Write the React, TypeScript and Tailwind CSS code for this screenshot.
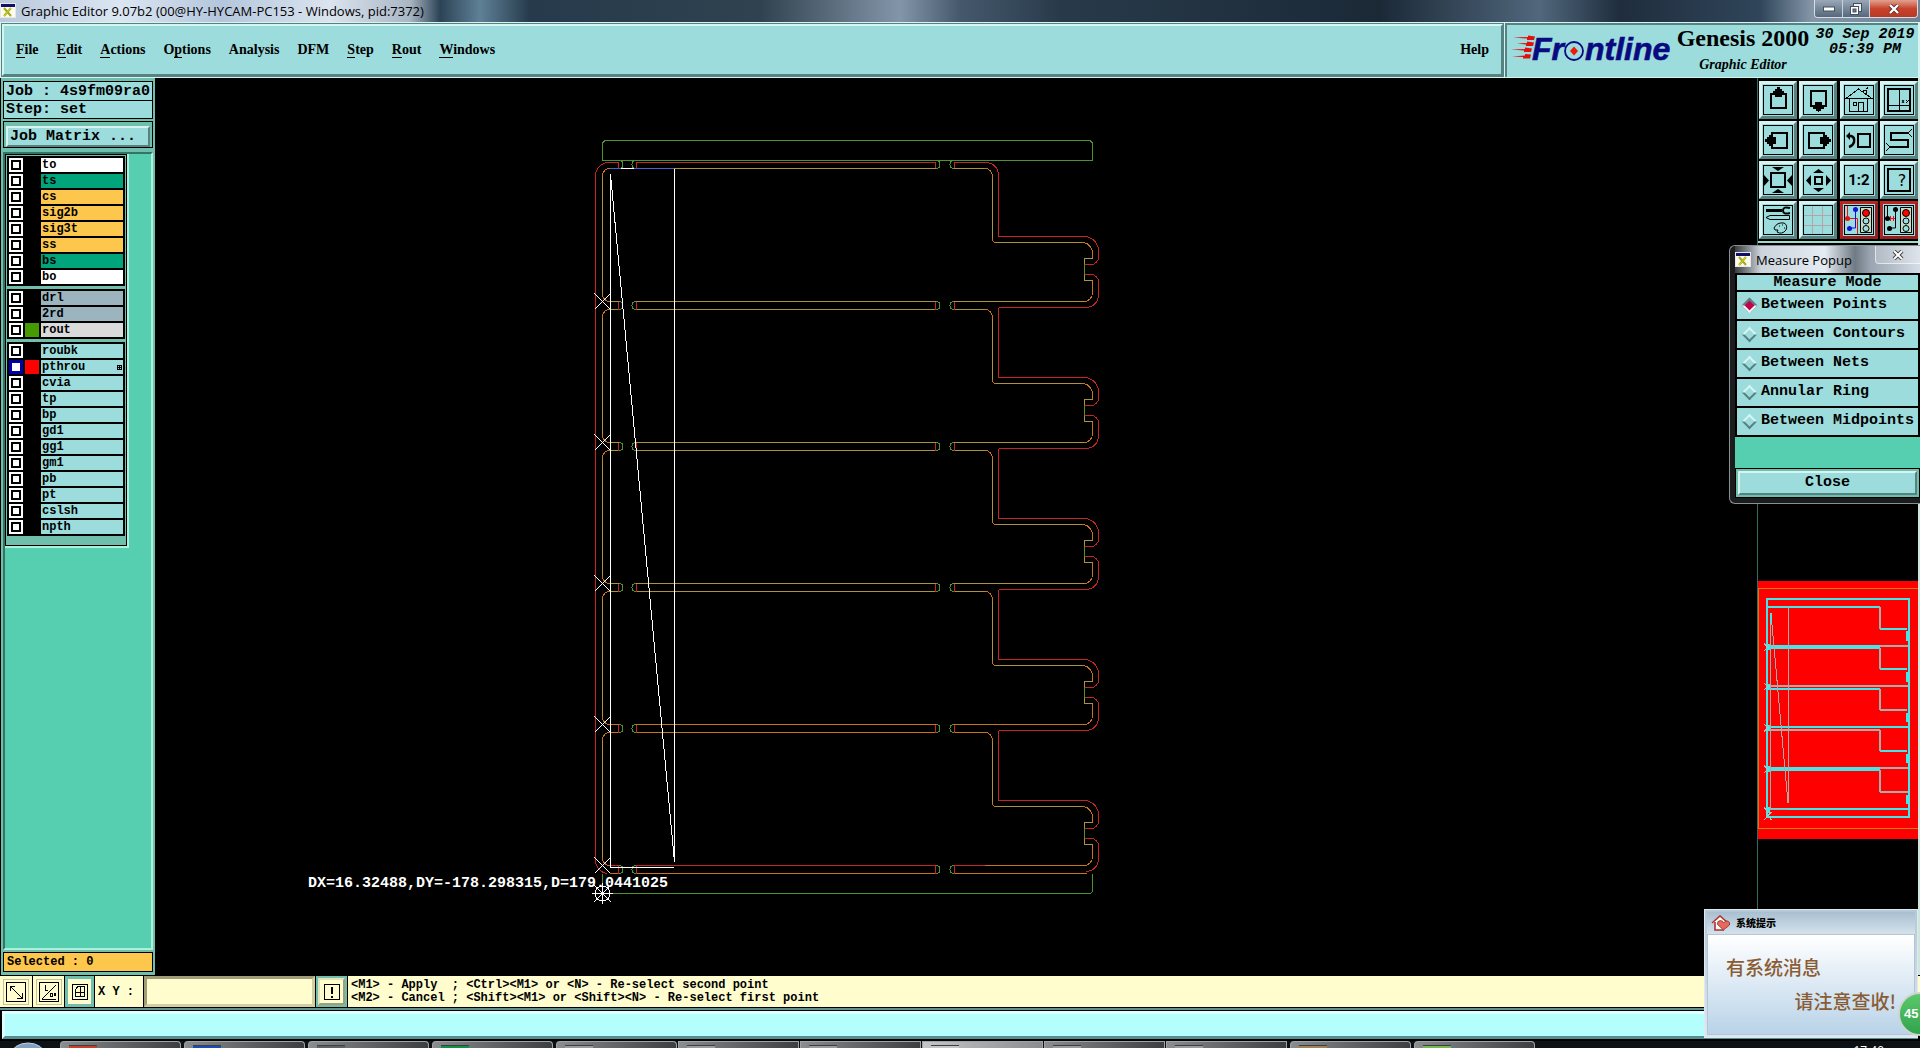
import React, { useState } from 'react';

const MONO = "font-['Liberation_Mono',monospace]";
const SERIF = "font-['Liberation_Serif',serif]";

// raised / sunken Motif bevels
const RAISED = 'border-t-[#d5f4f2] border-l-[#d5f4f2] border-b-[#568282] border-r-[#568282]';

interface MenuEntry {
  before: string;
  key: string;
  after: string;
}

const MENUS: MenuEntry[] = [
  { before: '', key: 'F', after: 'ile' },
  { before: '', key: 'E', after: 'dit' },
  { before: '', key: 'A', after: 'ctions' },
  { before: 'O', key: 'p', after: 'tions' },
  { before: 'Analysis', key: '', after: '' },
  { before: 'DFM', key: '', after: '' },
  { before: '', key: 'S', after: 'tep' },
  { before: '', key: 'R', after: 'out' },
  { before: '', key: 'W', after: 'indows' },
];

interface Layer {
  name: string;
  bg: string;
  swatch?: string;
  active?: boolean;
}

const BOARD = 'bg-[#9cdcdc]';

const LAYER_GROUPS: Layer[][] = [
  [
    { name: 'to', bg: 'bg-white' },
    { name: 'ts', bg: 'bg-[#00a57c]' },
    { name: 'cs', bg: 'bg-[#fdc64c]' },
    { name: 'sig2b', bg: 'bg-[#fdc64c]' },
    { name: 'sig3t', bg: 'bg-[#fdc64c]' },
    { name: 'ss', bg: 'bg-[#fdc64c]' },
    { name: 'bs', bg: 'bg-[#00a57c]' },
    { name: 'bo', bg: 'bg-white' },
  ],
  [
    { name: 'drl', bg: 'bg-[#9bb4be]' },
    { name: '2rd', bg: 'bg-[#9bb4be]' },
    { name: 'rout', bg: 'bg-[#dadada]', swatch: 'bg-[#479a00]' },
  ],
  [
    { name: 'roubk', bg: BOARD },
    { name: 'pthrou', bg: BOARD, swatch: 'bg-[#ff0000]', active: true },
    { name: 'cvia', bg: BOARD },
    { name: 'tp', bg: BOARD },
    { name: 'bp', bg: BOARD },
    { name: 'gd1', bg: BOARD },
    { name: 'gg1', bg: BOARD },
    { name: 'gm1', bg: BOARD },
    { name: 'pb', bg: BOARD },
    { name: 'pt', bg: BOARD },
    { name: 'cslsh', bg: BOARD },
    { name: 'npth', bg: BOARD },
  ],
];

const MEASURE_MODES = ['Between Points', 'Between Contours', 'Between Nets', 'Annular Ring', 'Between Midpoints'];

const AppIcon = () => (
  <svg viewBox="0 0 16 16" className="w-4 h-4 shrink-0" shapeRendering="crispEdges">
    <rect x="0" y="0" width="16" height="15" fill="#e8e8e8" />
    <rect x="1" y="1" width="14" height="3" fill="#10106a" />
    <rect x="1" y="4" width="14" height="10" fill="#fbfbf0" />
    <path d="M4 5 L11 13 M11 5 L4 13" stroke="#a4a818" strokeWidth="2" shapeRendering="auto" />
    <path d="M11 5 L4 13" stroke="#d8d820" strokeWidth="1" shapeRendering="auto" />
  </svg>
);

const TitleBar = () => (
  <header className="h-[22px] shrink-0 flex items-center bg-[linear-gradient(90deg,#b9c8dc_0px,#dce6f2_120px,#b4c6dc_220px,#dbe4ef_330px,#a9b6c4_410px,#2c4355_440px,#5f8096_480px,#263a4c_530px,#30424f_760px,#8395a8_900px,#46596c_960px,#283a4a_1060px,#1b2937_1380px,#51677c_1540px,#1f2d3d_1620px,#30455a_1760px,#8496a8_1812px,#6f8296_1920px)]">
    <AppIcon />
    <span className="ml-[5px] text-[13px] leading-5 text-black font-['Open_Sans',sans-serif]">
      Graphic Editor 9.07b2 (00@HY-HYCAM-PC153 - Windows, pid:7372)
    </span>
    <div className="ml-auto mr-[2px] self-start flex h-[18px] rounded-b border border-t-0 border-[#d5dde6] overflow-hidden">
      <button aria-label="Minimize" className="w-[28px] border-r border-[#c8d2dc] bg-gradient-to-b from-[#9aa8b8] to-[#56687c] flex items-center justify-center">
        <svg viewBox="0 0 12 6" className="w-3 h-[6px]"><rect x="0.5" y="1" width="11" height="4" fill="#fff" stroke="#44505e" /></svg>
      </button>
      <button aria-label="Restore" className="w-[27px] border-r border-[#c8d2dc] bg-gradient-to-b from-[#9aa8b8] to-[#56687c] flex items-center justify-center">
        <svg viewBox="0 0 12 12" className="w-3 h-3" fill="none">
          <rect x="3.5" y="0.5" width="8" height="8" fill="#eee" stroke="#44505e" />
          <rect x="0.5" y="3.5" width="8" height="8" fill="#fff" stroke="#44505e" />
          <rect x="3" y="6" width="3" height="3" fill="#6b7b8c" stroke="#44505e" />
        </svg>
      </button>
      <button aria-label="Close window" className="w-[47px] bg-gradient-to-b from-[#e0a090] via-[#c8432c] to-[#b83a24] flex items-center justify-center">
        <svg viewBox="0 0 12 10" className="w-3 h-[10px]">
          <path d="M2 1 L10 9 M10 1 L2 9" stroke="#5a2a2a" strokeWidth="4" />
          <path d="M2 1 L10 9 M10 1 L2 9" stroke="#fff" strokeWidth="2.4" />
        </svg>
      </button>
    </div>
  </header>
);

const Logo = () => (
  <svg viewBox="0 0 165 34" className="w-[165px] h-[34px] shrink-0">
    <g fill="#e01010">
      <path d="M4 5.5 L19 5 V3.500 L26 4.500 L25 8 L18 8 V6.5 Z" />
      <path d="M8 11.5 L18 11 V9.500 L25 10.500 L24 14 L17 14 V12.5 Z" />
      <path d="M2 17.5 L16 17 V15.5 L23 16.500 L22 20 L15 20 V18.5 Z" />
      <path d="M3 24.5 L16 23.5 V22 L22 22.500 L21 26.500 L14 26.5 V25 Z" />
    </g>
    <g fill="#0a0a80" stroke="#0a0a80" strokeWidth="0.6" fontFamily="'Liberation Sans', sans-serif" fontWeight="bold" fontStyle="italic" fontSize="32">
      <text x="23" y="28">Fr</text>
      <text x="76" y="28">ntline</text>
    </g>
    <circle cx="65" cy="19" r="9" fill="none" stroke="#0a0a80" strokeWidth="1.8" />
    <path d="M65 14.5 L69 19 L65 23.5 L61 19 Z" fill="#f01808" />
  </svg>
);

const MenuBar = () => (
  <div className="h-[56px] shrink-0 flex bg-[#d5f4f2]">
    <nav className={`flex-1 flex items-center m-[2px] pl-[12px] pr-3 border-2 bg-[#9cdcdc] ${RAISED} outline outline-1 outline-[#568282] ${SERIF} font-bold text-[14px] leading-4 gap-[18px]`}>
      {MENUS.map((m) => (
        <button key={m.before + m.key + m.after} className="whitespace-pre">
          {m.before}
          {m.key && <span className="border-b border-black">{m.key}</span>}
          {m.after}
        </button>
      ))}
      <button className="ml-auto">Help</button>
    </nav>
    <div className="w-[413px] mr-[2px] my-[1px] flex bg-[#9cdcdc] border-t-2 border-l-2 border-[#568282]">
      <div className="pt-[7px] pl-[2px]"><Logo /></div>
      <div className={`${SERIF} font-bold w-[138px] text-center shrink-0 whitespace-nowrap`}>
        <div className="text-[24px] leading-[27px]">Genesis 2000</div>
        <div className="text-[14px] leading-[26px] italic">Graphic Editor</div>
      </div>
      <div className={`${MONO} font-bold italic text-[15px] leading-[15px] pt-[2px] text-center flex-1 whitespace-nowrap`}>
        <div>30 Sep 2019</div>
        <div>05:39 PM</div>
      </div>
    </div>
  </div>
);

const LayerRow = ({ layer }: { layer: Layer }) => (
  <label className="flex gap-[2px] h-[14px]">
    <input
      type="checkbox"
      defaultChecked={layer.active}
      className="appearance-none w-[14px] h-[14px] shrink-0 bg-white border-2 border-white shadow-[inset_0_0_0_2px_#000] checked:border-[#0000a8] checked:shadow-[inset_0_0_0_1px_#0000a8]"
    />
    <span className={`w-[14px] shrink-0 ${layer.swatch ?? 'bg-black'}`} />
    <span className={`flex-1 pl-px flex items-center justify-between ${layer.bg}`}>
      <span className="text-[12px] leading-[14px]">{layer.name}</span>
      {layer.active && (
        <svg viewBox="0 0 5 5" className="w-[5px] h-[5px] mr-px" shapeRendering="crispEdges">
          <path d="M0 0 H5 V5 H0 Z" fill="#000" />
          <path d="M1 1 h1 v1 h-1 Z M3 1 h1 v1 h-1 Z M1 3 h1 v1 h-1 Z M3 3 h1 v1 h-1 Z" fill="#9cdcdc" />
        </svg>
      )}
    </span>
  </label>
);

const Sidebar = () => (
  <aside className={`w-[155px] shrink-0 flex flex-col bg-[#6fbfac] pl-[2px] pr-[2px] pt-[3px] pb-[3px] border-l border-black ${MONO} font-bold`}>
    <div className="border border-black bg-[#9cdcdc] h-[20px] px-[2px] text-[15px] leading-[19px] whitespace-pre">Job : 4s9fm09ra0</div>
    <div className="border border-black border-t-0 bg-[#9cdcdc] h-[18px] px-[2px] text-[15px] leading-[18px] whitespace-pre">Step: set</div>
    <div className="mt-[2px] border border-black p-[2px] h-[27px]">
      <button className={`w-full h-full border-2 bg-[#9cdcdc] text-left pl-[2px] text-[15px] leading-[17px] ${RAISED}`}>Job Matrix ...</button>
    </div>
    <div className="mt-[4px] flex-1 bg-[#55cfb0] border-2 border-t-[#347466] border-l-[#347466] border-r-[#aef0dc] border-b-[#aef0dc]">
      <div className="w-[124px] border-r-2 border-b-2 border-[#aef0dc] pt-0">
        <div className="border border-black p-px pb-[9px] flex flex-col gap-[3px] bg-[#6fbfac]">
          {LAYER_GROUPS.map((group) => (
            <div key={group[0].name} className="bg-black p-[2px] flex flex-col gap-[2px]">
              {group.map((l) => (
                <LayerRow key={l.name} layer={l} />
              ))}
            </div>
          ))}
        </div>
      </div>
    </div>
    <div className="mt-[2px] border border-black bg-[#fdc64c] h-[20px] px-[3px] text-[12px] leading-[18px]">Selected : 0</div>
  </aside>
);

const GREEN = '#4f9230';
const RED = '#c42626';
const YELLOW = '#ab9340';
const ORANGE = '#c87418';
const PITCH = 141;

const Slots = ({ y, top, bottom }: { y: number; top: string; bottom: string }) => (
  <g>
    <path d={`M610 ${y} H619 M636 ${y} H936 M954 ${y} H985`} stroke={top} />
    <path d={`M610 ${y + 8} H619 M636 ${y + 8} H936 M954 ${y + 8} H985`} stroke={bottom} />
    <path d={`M618.5 ${y} v8 M636.5 ${y} v8 M935.5 ${y} v8 M954.5 ${y} v8`} stroke={RED} />
    <path
      d={`M619 ${y} q4 0 4 4 t-4 4 M636 ${y} q-4 0 -4 4 t4 4 M936 ${y} q4 0 4 4 t-4 4 M954 ${y} q-4 0 -4 4 t4 4`}
      stroke={GREEN}
    />
  </g>
);

const Unit = ({ index }: { index: number }) => (
  <g transform={`translate(0 ${index * PITCH})`}>
    <path d="M602.5 176 V294" stroke={YELLOW} />
    <path d="M610.5 168.5 q-8 0 -8 8 M602.5 293 q0 8.500 8 8.500" stroke={ORANGE} />
    <path d="M984 168.500 q8.500 0 8.500 8.500 V239 q0 3.500 3.500 3.500" stroke={ORANGE} />
    <path d="M992.500 178 V238" stroke={YELLOW} />
    <path d="M996 242.500 H1082" stroke={YELLOW} />
    <path d="M1082 242.500 a10.500 10.500 0 0 1 10.500 10.500 V258.500" stroke={ORANGE} />
    <path d="M1092.500 258.500 H1084.500 V264 M1084.500 275 V280.500 H1092.500" stroke={YELLOW} />
    <path d="M1084.500 264 V275" stroke={GREEN} />
    <path d="M1092.500 280.500 V293 a8.500 8.500 0 0 1 -8.500 8.500" stroke={ORANGE} />
    <path d="M985 301.500 H1084" stroke={index > 2 ? ORANGE : YELLOW} />
    <path d={index === 0 ? 'M986 162.500 a12.500 12.500 0 0 1 12.500 12.500 V236.500' : 'M998.500 166.500 V236.500'} stroke={RED} />
    <path
      d="M998 236.500 H1084 a14.500 14.500 0 0 1 14.500 14.500 V257 a7.500 7.500 0 0 1 -7.500 7.500 H1084.500 M1084.500 274.500 H1091 a7.500 7.500 0 0 1 7.500 7.500 V295 a12.500 12.500 0 0 1 -12.500 12.500"
      stroke={RED}
    />
    {index < 4 && <path d="M998.500 307.500 H1087" stroke={RED} />}
    <path d="M594.500 293.500 L610.500 309.500 M610.500 293.500 L594.500 309.500" stroke="#ffffff" />
  </g>
);

const BoardCanvas = () => (
  <svg viewBox="155 78 1602 897" className="w-full h-full block" fill="none" strokeWidth="1" shapeRendering="crispEdges">
    <path d="M602.500 160.500 V144.500 q0 -4 4 -4 H1088.500 q4 0 4 4 V160.500 Z" stroke={GREEN} />
    <path d="M602.500 873.500 V893.500 H1088.500 q4 0 4 -4 V873.500" stroke={GREEN} />
    <path d="M618.500 162.500 H609 a13.500 13.500 0 0 0 -13.500 13.500 V860 a13.500 13.500 0 0 0 12 13.500" stroke={RED} />
    <path d="M618.500 162.500 v6 M636.500 168.500 V162.500 H935.500 v6 M954.500 168.500 V162.500 H986" stroke={RED} />
    <path d="M619 160.500 q4 0 4 4 t-4 4 M636 160.500 q-4 0 -4 4 t4 4 M936 160.500 q4 0 4 4 t-4 4 M954 160.500 q-4 0 -4 4 t4 4" stroke={GREEN} />
    <path d="M674 168.500 H936 M954 168.500 H985" stroke={YELLOW} />
    {[0, 1, 2, 3, 4].map((i) => (
      <Unit key={i} index={i} />
    ))}
    <Slots y={301.5} top={YELLOW} bottom={YELLOW} />
    <Slots y={442.5} top={YELLOW} bottom={YELLOW} />
    <Slots y={583.5} top={YELLOW} bottom={YELLOW} />
    <Slots y={724.5} top={ORANGE} bottom={ORANGE} />
    <Slots y={865.5} top={RED} bottom={ORANGE} />
    <path d="M985 873.500 H1087" stroke={ORANGE} />

    <path d="M610 168.500 H674" stroke="#4a62d8" />
    <path d="M621 168.500 H634" stroke="#ffffff" />
    <path d="M610.500 174 V867.500 H674 M674.500 169 V862 L610.500 174" stroke="#ffffff" />

    <g stroke="#ffffff">
      <circle cx="602.500" cy="893.500" r="7.500" />
      <path d="M592 893.500 H613 M602.500 883 V904 M594 885 L611 902 M611 885 L594 902" />
    </g>
    <text x="308" y="887" fill="#ffffff" className={`${MONO} font-bold text-[15px]`}>
      DX=16.32488,DY=-178.298315,D=179.0441025
    </text>
  </svg>
);

const K = '#000';

// every glyph is drawn on a 30x30 grid inside its own 1px frame
const TOOLS: { label: string; art: React.ReactNode; danger?: boolean }[] = [
  { label: 'Pan up', art: <><path d="M8 9 H23 V23 H8 Z" stroke={K} strokeWidth="2" /><path d="M12 12 V8 H10 V6 H12 V4 H14 V2 H17 V4 H19 V6 H21 V8 H19 V12 Z" fill={K} /></> },
  { label: 'Pan down', art: <><path d="M8 6 H23 V21 H8 Z" stroke={K} strokeWidth="2" /><path d="M12 17 V22 H10 V24 H13 V26 H15 V27 H16 V26 H18 V24 H21 V22 H19 V17 Z" fill={K} /></> },
  { label: 'Home', art: <path d="M2 13.500 L14.500 4 L28 13.500 Z M5.500 13.500 V26.500 H23.500 V13.500 M14.500 26.500 V17.500 H19.500 V26.500 M9.500 17.500 H12.500 V20.500 H9.500 Z M19.500 7 V5.500 H22.500 V10 M21.500 3.500 H23.500 V1.500" stroke={K} shapeRendering="crispEdges" /> },
  { label: 'XY view', art: <><path d="M4 4 H26 V26 H4 Z" stroke={K} strokeWidth="2" /><path d="M15.5 4 V26 M4 20.500 H26 M18 15 L20 18 M20 15 L18 18 M22 15 L23.500 16.500 M25 15 L22 18" stroke={K} /></> },
  { label: 'Pan left', art: <><path d="M9 8 H24 V23 H9 Z" stroke={K} strokeWidth="2" /><path d="M13 12 H8 V10 H6 V12 H4 V14 H2 V17 H4 V19 H6 V21 H8 V19 H13 Z" fill={K} /></> },
  { label: 'Pan right', art: <><path d="M6 8 H21 V23 H6 Z" stroke={K} strokeWidth="2" /><path d="M17 12 H22 V10 H24 V12 H26 V14 H28 V17 H26 V19 H24 V21 H22 V19 H17 Z" fill={K} /></> },
  { label: 'Previous view', art: <><path d="M14 9 H26 V22 H14 Z" stroke={K} strokeWidth="2" /><path d="M2 11 L6 7 V15 Z" fill={K} /><path d="M5 11 H7 Q11 12 10 17 Q9 21 5 22" stroke={K} strokeWidth="2.500" /></> },
  { label: 'Serpentine', art: <><path d="M25 8 H7 V15 H24 V22 H5" stroke={K} strokeWidth="2" /><path d="M24 8 L28 4 M24 8 L28 12 M6 22 L2 18 M6 22 L2 26" stroke={K} /></> },
  { label: 'Zoom in', art: <><path d="M8 8 H22 V22 H8 Z" stroke={K} strokeWidth="2" /><path d="M9 2 H21 L15 6 Z M9 28 H21 L15 24 Z M1 10 V21 L6 15.500 Z M29 10 V21 L24 15.500 Z" fill={K} /></> },
  { label: 'Zoom out', art: <><path d="M12 12 H19 V19 H12 Z" stroke={K} strokeWidth="2" /><path d="M10 8 H21 L15.500 4 Z M10 23 H21 L15.500 27 Z M8 10 V21 L3 15.500 Z M23 10 V21 L28 15.500 Z" fill={K} /></> },
  { label: 'Scale 1:2', art: <text x="15" y="20" textAnchor="middle" fill={K} className="font-['Roboto',sans-serif] text-[15px] font-bold">1:2</text> },
  { label: 'Query', art: <><path d="M4 4 H26 V26 H4 Z" stroke={K} strokeWidth="2" /><text x="18" y="21" textAnchor="middle" fill={K} className="font-['DejaVu_Sans',sans-serif] text-[16px]">?</text></> },
  { label: 'Options', art: <><path d="M3 5.500 H19" stroke={K} strokeWidth="3" /><path d="M27 3 Q20 1 20 5.500 Q20 10 27 8" stroke={K} strokeWidth="2" /><path d="M3 12.500 L7 10.500 H26.500 V14.500 H7 Z" stroke={K} /><path d="M11 23 Q14 17 21 18 Q25 20 23 25 Q19 30 14 27 L15 25 L12 25 Z M16 21 h1 M19 20 h1 M21 23 h1" stroke={K} /></> },
  { label: 'Grid', art: <path d="M1 10.500 H29 M1 20.500 H29 M9.500 1 V29 M19.500 1 V29" stroke="#b3a5a8" /> },
  { label: 'Net compare', danger: true, art: <><path d="M3.500 1 V13 M3.500 13.500 H13.500 V29" stroke="#e81010" /><path d="M11.500 4 V23 H6" stroke="#1010e0" /><circle cx="3.500" cy="13.500" r="2.500" fill="#e81010" /><circle cx="11.500" cy="4.500" r="2.500" fill="#1010e0" /><circle cx="5.500" cy="23.500" r="2.500" fill="#1010e0" /></> },
  { label: 'Net check', danger: true, art: <><path d="M3.500 1 V13 M11.500 4 V23 H6" stroke={K} /><path d="M4 13.500 H11 M6.500 11 V16 M9.500 11 V16" stroke="#e81010" /><circle cx="3.500" cy="13.500" r="2.500" fill={K} /><circle cx="11.500" cy="4.500" r="2.500" fill={K} /><circle cx="5.500" cy="23.500" r="2.500" fill={K} /></> },
];

const TrafficLight = () => (
  <g>
    <path d="M16.500 2.500 H27.500 V27.500 H16.500 Z" fill="#c4dcc8" stroke={K} />
    <circle cx="22" cy="8" r="3.500" fill="#ff0000" stroke={K} />
    <circle cx="22" cy="16" r="3" fill="#9cdcdc" stroke={K} />
    <circle cx="22" cy="23.500" r="3" fill="#9cdcdc" stroke={K} />
  </g>
);

const ToolPalette = () => (
  <div className="bg-black grid grid-cols-4 gap-[2px] pl-px pt-[3px] pb-[2px] border-b-2 border-[#9cdcc8]">
    {TOOLS.map((t) => (
      <button
        key={t.label}
        aria-label={t.label}
        className={`w-[38px] h-[38px] flex items-center justify-center border-[3px] bg-[#9cdcdc] ${
          t.danger ? 'border-t-[#b82424] border-l-[#b82424] border-b-[#962020] border-r-[#962020]' : RAISED
        }`}
      >
        <svg viewBox="0 0 30 30" className="w-[30px] h-[30px] shrink-0" fill="none">
          <rect x="0.5" y="0.5" width="29" height="29" stroke={K} strokeWidth="1" />
          {t.art}
          {t.danger && <TrafficLight />}
        </svg>
      </button>
    ))}
  </div>
);

const Overview = () => (
  <svg viewBox="54 33 480 774" className="w-full h-auto block bg-[#ff0000]" fill="none" shapeRendering="crispEdges">
    <path d="M540 55 H55 V775 H540" stroke="#d08010" strokeWidth="3" />
    <g stroke="#45e6ea" strokeWidth="6">
      <path d="M81 87 H507 V741 H81 Z" />
      <path d="M84 111 H420 M90 717 H507" />
      <path d="M420 177 H500 M420 297 H500 M420 420 H500 M420 543 H500 M420 666 H500" />
      <path d="M84 231 H420 M84 597 H420" strokeWidth="12" />
      <path d="M84 357 H420 M84 471 H504" />
      <path d="M501 184 V214 M501 307 V336 M501 430 V457 M501 552 V580 M501 674 V702" strokeWidth="8" />
      <path d="M84 222 V240 M84 342 V360 M84 464 V482 M84 588 V606 M84 710 V728" strokeWidth="12" />
    </g>
    <g stroke="#a8acac" strokeWidth="6">
      <path d="M420 111 V177 M420 234 V297 M420 357 V420 M420 480 V543 M420 600 V666" />
      <path d="M420 228 H504 M92 348 H504 M92 480 H420 M420 594 H504 M420 420 H498 M420 666 H504" />
    </g>
    <g stroke="#a8acac" strokeWidth="3">
      <path d="M92 130 V717 H145 M145 111 V700 M93 130 L144 700" />
    </g>
    <path d="M93 130 V162" stroke="#45e6ea" strokeWidth="5" />
    <path d="M72 220 L84 232 L72 242 M72 340 L84 350 L72 360 M72 462 L84 472 L72 484 M72 586 L84 598 L72 608 M72 710 L94 750 M94 726 L72 750" stroke="#a8c8c8" strokeWidth="3" />
  </svg>
);

const ToolColumn = () => (
  <aside className="w-[163px] shrink-0 flex flex-col bg-black border-l border-[#2f6e60] border-r-2 border-r-[#cfe6dc]">
    <ToolPalette />
    <div className="pt-[338px]">
      <Overview />
    </div>
  </aside>
);

const MeasurePopup = () => {
  const [mode, setMode] = useState(MEASURE_MODES[0]);
  return (
    <section className={`absolute right-0 top-[245px] w-[191px] rounded-l-md border border-r-0 border-[#8a8f94] bg-[#1a1c1e] pl-[5px] pb-[5px] ${MONO} font-bold text-[15px]`}>
      <div className="h-[27px] flex items-center bg-[linear-gradient(90deg,#3a3c40_0px,#ccd4dc_26px,#e4ebf2_90px,#707a84_120px,#98a4b0_135px,#d4dce6_184px)]">
        <AppIcon />
        <span className="ml-[5px] font-normal text-[13px] leading-5 font-['Open_Sans',sans-serif]">Measure Popup</span>
        <button aria-label="Close popup" className="ml-auto self-start w-[45px] h-[18px] rounded-bl border-l border-b border-white/60 bg-white/20 flex items-center justify-center">
          <svg viewBox="0 0 12 10" className="w-3 h-[10px]">
            <path d="M2 1 L10 9 M10 1 L2 9" stroke="#444" strokeWidth="4" />
            <path d="M2 1 L10 9 M10 1 L2 9" stroke="#fff" strokeWidth="2" />
          </svg>
        </button>
      </div>
      <div role="radiogroup" aria-labelledby="measure-title" className="bg-black flex flex-col gap-[2px] p-[2px]">
        <div id="measure-title" className="h-[15px] leading-[15px] bg-[#9cdcdc] text-center">Measure Mode</div>
        {MEASURE_MODES.map((m) => (
          <label key={m} className="h-[27px] pl-[7px] flex items-center gap-[6px] bg-[#9cdcdc] whitespace-nowrap">
            <input
              type="radio"
              name="measure-mode"
              checked={mode === m}
              onChange={() => setMode(m)}
              className="appearance-none shrink-0 w-[11px] h-[11px] rotate-45 border-2 border-t-[#d5f4f2] border-l-[#d5f4f2] border-b-[#568282] border-r-[#568282] checked:bg-[#c8004c] checked:border-t-[#568282] checked:border-l-[#568282] checked:border-b-[#e8fafa] checked:border-r-[#e8fafa]"
            />
            {m}
          </label>
        ))}
      </div>
      <div className="h-[31px] bg-[#55cfb0]" />
      <div className="h-[30px] border border-black bg-[#6fbfac] p-[2px]">
        <button className={`w-full h-full border-2 bg-[#9cdcdc] leading-5 ${RAISED}`}>Close</button>
      </div>
    </section>
  );
};

const CREAM_BEVEL = 'border-t-[#e6e4b8] border-l-[#e6e4b8] border-b-[#a09e78] border-r-[#a09e78]';

const StatusBar = () => (
  <div className={`h-[33px] shrink-0 flex bg-black py-px gap-px ${MONO} font-bold text-[12px]`}>
    <button aria-label="Snap mode" className="w-[32px] bg-[#fffdce] flex items-center justify-center">
      <svg viewBox="0 0 26 26" className="w-[26px] h-[26px]" fill="none" stroke={K} shapeRendering="crispEdges">
        <rect x="0.5" y="0.5" width="25" height="25" stroke="#c4c298" />
        <rect x="3.5" y="3.5" width="19" height="19" />
        <path d="M7 7 L19 19 M7 12 V7 H12 M14 19 H19 V14" />
      </svg>
    </button>
    <button aria-label="Angle mode" className="w-[31px] bg-[#fffdce] flex items-center justify-center">
      <svg viewBox="0 0 26 26" className="w-[26px] h-[26px]" fill="none" stroke={K} shapeRendering="crispEdges">
        <rect x="0.5" y="0.5" width="25" height="25" stroke="#c4c298" />
        <rect x="3.5" y="3.5" width="19" height="19" />
        <path d="M6 20 L20 6 M9 6 V11 H12 M6 20.500 H20 M14 14 h2 v3 h-2 z M18 14 l2 3 m0 -3 l-2 3" />
      </svg>
    </button>
    <button aria-label="Grid mode" className="w-[29px] bg-[#fffdce] border-[3px] border-[#6fbfac] flex items-center justify-center">
      <svg viewBox="0 0 16 16" className="w-4 h-4" fill="none" stroke={K} shapeRendering="crispEdges">
        <path d="M0.5 0.5 H15.500 V15.500 H0.5 Z M3 12.500 V6 L6 2.500 H12.500 V12.500 Z M8.500 2 V13 M3 8.500 H13" />
      </svg>
    </button>
    <label htmlFor="xy" className="w-[48px] bg-[#fffdce] flex items-center pl-[3px] whitespace-pre">X Y :</label>
    <input
      id="xy"
      type="text"
      className="w-[171px] bg-[#fffdce] border-[3px] border-t-[#a09e78] border-l-[#a09e78] border-b-[#d2d0a0] border-r-[#d2d0a0] px-1 outline-none"
    />
    <button aria-label="Alert" className="w-[31px] bg-[#6fbfac] p-[2px]">
      <span className={`w-full h-full border-2 ${CREAM_BEVEL} bg-[#fffdce] flex items-center justify-center`}>
        <svg viewBox="0 0 16 16" className="w-4 h-4 shrink-0" fill="none" stroke={K} shapeRendering="crispEdges">
          <path d="M0.5 0.5 H15.500 V15.500 H0.5 Z" />
          <path d="M8 3 V10 M8 12 V14" strokeWidth="2" />
        </svg>
      </span>
    </button>
    <div className="flex-1 bg-[#fffdce] pl-[3px] pt-[3px] leading-[13px] whitespace-pre">
      <div>{'<M1> - Apply  ; <Ctrl><M1> or <N> - Re-select second point'}</div>
      <div>{'<M2> - Cancel ; <Shift><M1> or <Shift><N> - Re-select first point'}</div>
    </div>
  </div>
);

const TASKS: { color: string; grouped?: boolean; lit?: boolean }[] = [
  { color: 'bg-[#c8402c]' },
  { color: 'bg-[#1a4cb8]' },
  { color: 'bg-[#5c6468]' },
  { color: 'bg-[#109048]' },
  { color: 'bg-[#9a9d9f]' },
  { color: 'bg-[#9a9d9f]', grouped: true },
  { color: 'bg-[#9a9d9f]', grouped: true },
  { color: 'bg-[#c4c6c8]', grouped: true, lit: true },
  { color: 'bg-[#9a9d9f]', grouped: true },
  { color: 'bg-[#9a9d9f]', grouped: true },
  { color: 'bg-[#a08458]' },
  { color: 'bg-[#78b850]' },
];

const Taskbar = () => (
  <footer className="h-[7px] shrink-0 overflow-hidden flex items-start bg-[#0c1116] pl-[10px]">
    <svg viewBox="0 0 36 7" className="w-9 h-[7px] mr-[11px] shrink-0">
      <ellipse cx="18" cy="14" rx="17" ry="12" fill="#7f9fc4" stroke="#c4d4e4" />
    </svg>
    {TASKS.map((t, i) => (
      <span
        key={i}
        className={`w-[121px] h-[7px] shrink-0 border-t border-x border-[#a0a4a8] bg-gradient-to-r pl-2 pt-[3px] ${
          t.grouped ? 'ml-px' : 'ml-[3px] rounded-t-sm'
        } ${t.lit ? 'from-[#c4c6c8] to-[#8a8d90]' : 'from-[#8a8d90] to-[#3c3f42]'}`}
      >
        <span className={`block w-[28px] h-1 border-t border-[#3c3f42] ${t.color}`} />
      </span>
    ))}
    <span className="ml-auto mr-9 pt-1 text-white text-[12px] leading-3 font-['Open_Sans',sans-serif]">17:40</span>
  </footer>
);

const Notification = () => (
  <section className="absolute right-[2px] bottom-[10px] w-[214px] h-[129px] border border-[#dfe9f2] bg-gradient-to-b from-[#b4c8d8] to-[#dce8f0] p-[2px] flex flex-col font-['Noto_Sans_CJK_SC',sans-serif]">
    <div className="h-[22px] flex items-center pl-1 gap-[5px] bg-gradient-to-b from-[#a9bfd0] to-[#d4e2ec]">
      <svg viewBox="0 0 20 16" className="w-5 h-4">
        <path d="M1 8 L9 1 L17 8 M4 7 V15 H13" fill="#fff" stroke="#b03030" strokeWidth="1.600" />
        <path d="M12.500 15 L6.500 9.500 Q6 5.500 9.500 5.500 Q12 5.500 12.500 8 Q14 5.500 16.500 6 Q19.500 7 18.500 10 Z" fill="#e8685c" stroke="#7c2020" strokeWidth="0.7" />
      </svg>
      <span className="text-[10px] leading-4 font-black text-black">系统提示</span>
    </div>
    <div className="flex-1 border border-[#b4c6d6] bg-gradient-to-b from-white via-[#dce9f4] to-[#b9d3e8] text-[19px] leading-[24px] text-[#8a5c34] pt-[20px] font-medium">
      <div className="pl-[18px]">有系统消息</div>
      <div className="pt-[10px] pr-[18px] text-right whitespace-nowrap">请注意查收!</div>
    </div>
  </section>
);

export default function App() {
  return (
    <div className="relative h-screen min-h-[700px] flex flex-col overflow-hidden bg-black text-black">
      <TitleBar />
      <MenuBar />
      <main className="flex-1 min-h-0 flex">
        <Sidebar />
        <div className="flex-1 min-w-0">
          <BoardCanvas />
        </div>
        <ToolColumn />
      </main>
      <StatusBar />
      <div className="h-[33px] shrink-0 border-t-2 border-[#608f8f] bg-black pt-px pb-[2px] px-[2px]">
        <div className="h-full border-[3px] border-t-[#dcffff] border-l-[#dcffff] border-b-[#568f8f] border-r-[#568f8f] bg-[#b4fffe]" />
      </div>
      <Taskbar />
      <MeasurePopup />
      <Notification />
      <span className="absolute -right-[22px] bottom-[12px] w-[44px] h-[44px] rounded-full border-2 border-[#d0d4d0] bg-gradient-to-b from-[#5cc86c] to-[#2ea44c] text-white font-bold text-[13px] leading-[40px] pl-1 font-['Liberation_Sans',sans-serif]">
        45
      </span>
    </div>
  );
}
